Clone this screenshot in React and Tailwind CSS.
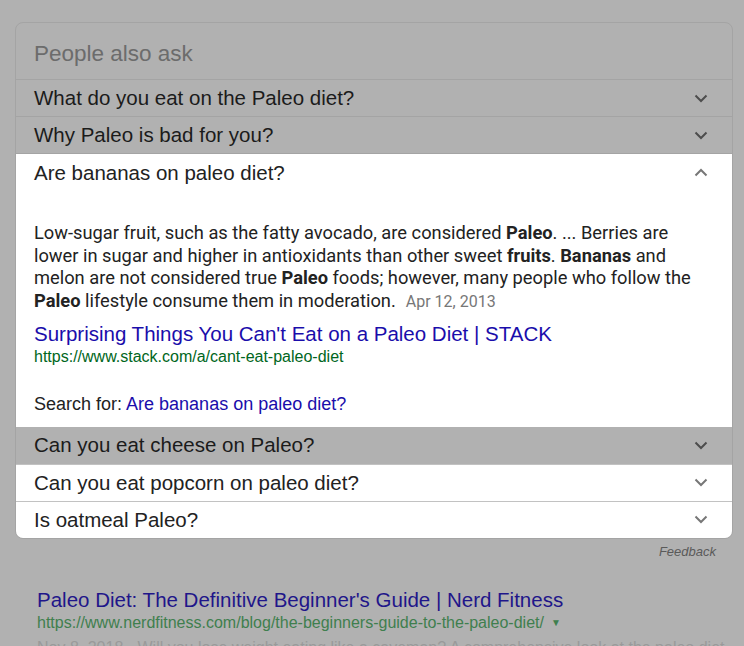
import React from "react";

const Chevron = ({ up, className }) => (
  <svg width="14" height="9" viewBox="0 0 14 9" fill="none" className={className}>
    <path
      d={up ? "M1.5 7.5 7 2l5.5 5.5" : "M1.5 1.5 7 7l5.5-5.5"}
      stroke="currentColor"
      strokeWidth="2"
    />
  </svg>
);

const Row = ({ text, dim, noBorder }) => (
  <div
    className={`flex items-center justify-between h-[37px] pl-[18px] pr-[24px] ${
      dim ? "bg-[#b1b1b1] border-[#a4a4a4]" : "bg-white border-[#c2c2c2]"
    } ${noBorder ? "" : "border-t"}`}
  >
    <span className={`text-[20.5px] leading-[36px] ${dim ? "text-[#1b1b1b]" : "text-[#222]"}`}>
      {text}
    </span>
    <Chevron className={dim ? "text-[#4d4d4d]" : "text-[#777]"} />
  </div>
);

export default function App() {
  return (
    <div
      className="h-[646px] overflow-hidden bg-[#b1b1b1] pt-[22px] pl-[15px]"
      style={{ fontFamily: '"Liberation Sans", Arial, sans-serif' }}
    >
      <div className="w-[718px] rounded-lg border border-[#a4a4a4] overflow-hidden">
        <div className="h-[56px] pl-[18px] pt-[17px] text-[22.5px] leading-[28px] text-[#6c6c6c]">
          People also ask
        </div>
        <Row text="What do you eat on the Paleo diet?" dim />
        <Row text="Why Paleo is bad for you?" dim />

        <div className="bg-white border-t border-[#a4a4a4]">
          <div className="flex items-center justify-between h-[37px] pl-[18px] pr-[24px]">
            <span className="text-[20.5px] leading-[37px] text-[#222]">Are bananas on paleo diet?</span>
            <Chevron up className="text-[#777]" />
          </div>
          <div className="pl-[18px] pr-[24px] pt-[31px] pb-[12px]">
            <p
              className="text-[18.3px] leading-[22.7px] text-[#222]"
              style={{ fontFamily: "Roboto, sans-serif" }}
            >
              Low-sugar fruit, such as the fatty avocado, are considered <b>Paleo</b>. ... Berries are
              lower in sugar and higher in antioxidants than other sweet <b>fruits</b>. <b>Bananas</b> and
              melon are not considered true <b>Paleo</b> foods; however, many people who follow the{" "}
              <b>Paleo</b> lifestyle consume them in moderation.
              <span className="ml-[10px] text-[16px] text-[#777]">Apr 12, 2013</span>
            </p>
            <div className="mt-[7px] text-[20.5px] leading-[26px] text-[#1a0dab]">
              Surprising Things You Can't Eat on a Paleo Diet | STACK
            </div>
            <div className="text-[16px] leading-[20px] text-[#006621]">
              https://www.stack.com/a/cant-eat-paleo-diet
            </div>
            <div className="mt-[26px] text-[18px] leading-[22px] text-[#222]">
              Search for: <span className="text-[#1a0dab]">Are bananas on paleo diet?</span>
            </div>
          </div>
        </div>

        <Row text="Can you eat cheese on Paleo?" dim noBorder />
        <Row text="Can you eat popcorn on paleo diet?" />
        <Row text="Is oatmeal Paleo?" />
      </div>

      <div className="w-[718px] flex justify-end pr-[17px] pt-[3px]">
        <span className="text-[13px] italic text-[#5a5a5a]">Feedback</span>
      </div>

      <div className="pl-[22px] pt-[26px]">
        <div className="text-[20.5px] leading-[26px] text-[#1f168a]">
          Paleo Diet: The Definitive Beginner's Guide | Nerd Fitness
        </div>
        <div className="flex items-center gap-[7px] text-[16px] leading-[20px] text-[#3f7f4e]">
          https://www.nerdfitness.com/blog/the-beginners-guide-to-the-paleo-diet/
          <span className="text-[10px]">▼</span>
        </div>
        <div className="pt-[4px] text-[16px] leading-[22px] text-[#9a9a9a]">
          Nov 8, 2018 - Will you lose weight eating like a caveman? A comprehensive look at the paleo diet.
        </div>
      </div>
    </div>
  );
}
